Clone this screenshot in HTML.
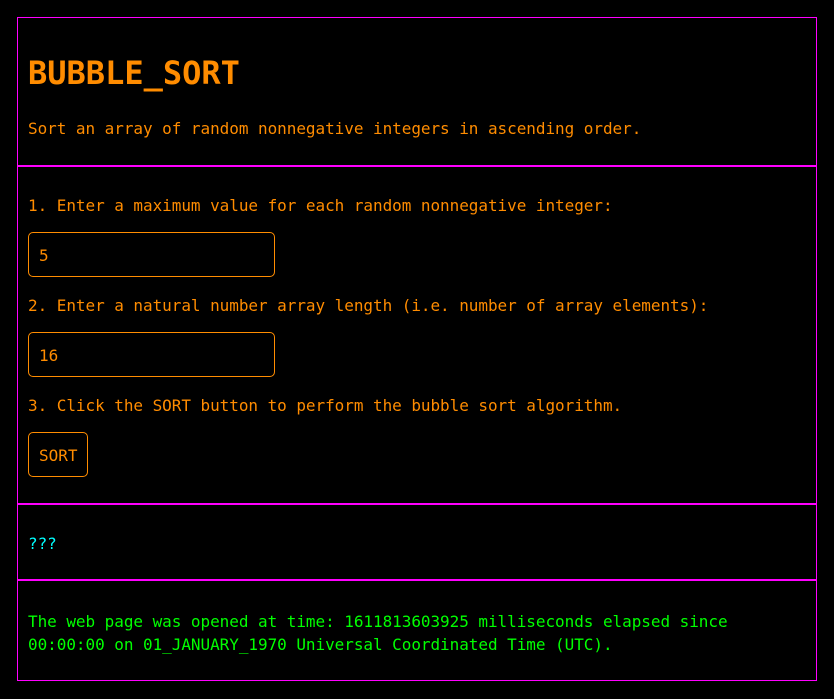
<!DOCTYPE html>
<html><head><style>
body{margin:0;background:#000;width:834px;height:699px;position:relative;overflow:hidden;font-family:"DejaVu Sans Mono","Liberation Mono",monospace;font-size:16px;color:#ff8c00}
.box{position:absolute;left:17px;top:17px;width:798px;height:662px;border:1px solid #f0f}
.hr{position:absolute;left:17px;width:800px;height:0;border-top:2px solid #f0f}
.t{position:absolute;left:28px;white-space:nowrap;line-height:20px;letter-spacing:-0.05px}
.in{position:absolute;left:28px;width:247px;height:45px;border:1px solid #ff8c00;border-radius:5px;box-sizing:border-box;padding-left:10px;line-height:45px}
</style></head><body>
<div class="box"></div>
<div class="hr" style="top:165px"></div>
<div class="hr" style="top:503px"></div>
<div class="hr" style="top:579px"></div>
<div class="t" style="top:55px;font-size:32px;font-weight:bold;line-height:36px;letter-spacing:0">BUBBLE_SORT</div>
<div class="t" style="top:119px">Sort an array of random nonnegative integers in ascending order.</div>
<div class="t" style="top:196px">1. Enter a maximum value for each random nonnegative integer:</div>
<div class="in" style="top:232px">5</div>
<div class="t" style="top:296px">2. Enter a natural number array length (i.e. number of array elements):</div>
<div class="in" style="top:332px">16</div>
<div class="t" style="top:396px">3. Click the SORT button to perform the bubble sort algorithm.</div>
<div class="in" style="top:432px;width:60px">SORT</div>
<div class="t" style="top:534px;color:#00ffff">???</div>
<div class="t" style="top:610px;color:#00ff00;line-height:23px">The web page was opened at time: 1611813603925 milliseconds elapsed since<br>00:00:00 on 01_JANUARY_1970 Universal Coordinated Time (UTC).</div>
</body></html>
